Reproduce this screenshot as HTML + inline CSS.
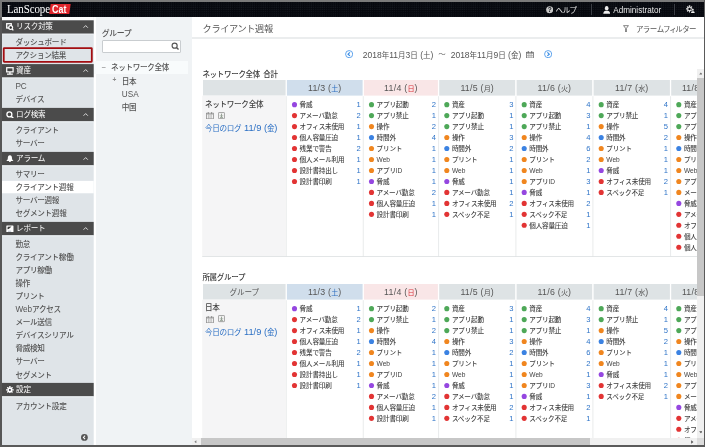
<!DOCTYPE html>
<html lang="ja"><head><meta charset="utf-8"><title>LanScope Cat</title>
<style>
html,body{margin:0;padding:0;}
body{width:705px;height:447px;overflow:hidden;position:relative;background:#fff;font-family:"Liberation Sans","Noto Sans CJK JP",sans-serif;color:#4a4a4a;-webkit-font-smoothing:antialiased;}
div,span,i,b{box-sizing:border-box}
.abs{position:absolute}
#app{position:absolute;left:0;top:0;width:705px;height:447px;will-change:transform;overflow:hidden}
#frame-t{left:0;top:0;width:705px;height:2px;background:#7a7a7a}
#frame-l{left:0;top:0;width:1.8px;height:447px;background:linear-gradient(#787878 0,#787878 17px,#565656 18px,#565656 100%)}
#frame-r{left:704px;top:0;width:1px;height:447px;background:#5a5a5a}
#frame-b{left:0;top:445px;width:705px;height:2px;background:#5a5a5a}
#top{left:1.8px;top:2px;width:702.2px;height:15.4px;background:#06080e;background-image:radial-gradient(circle at 1px 1px,#15181f 0.5px,transparent 0.8px);background-size:2.2px 2.2px;}
#logo{left:7.2px;top:0.9px;font-family:"Liberation Serif",serif;color:#fff;font-size:12.2px;line-height:16px;letter-spacing:-0.12px;transform:scaleX(0.9);transform-origin:0 0;font-feature-settings:normal}
#cat{left:50.4px;top:4px;width:20px;height:9.6px;background:#e0262c;transform:skewX(-8deg);}
#cattx{left:52.2px;top:2.9px;color:#fff;font-weight:bold;font-size:10.6px;line-height:13px;letter-spacing:0.1px;transform:scaleX(0.84);transform-origin:0 0}
.tm{font-feature-settings:"palt";color:#e8e8e8;font-size:7.5px;line-height:10px;top:5.8px;white-space:nowrap}
.sep{top:4px;width:0.8px;height:11px;background:#3a3d44}
#side{left:1.8px;top:17.4px;width:92px;height:427.6px;background:#dfe4e8}
#side-top{left:1.8px;top:17.4px;width:92px;height:2.9px;background:#fff}
.sh{position:absolute;left:1.8px;width:92px;height:13.3px;color:#fff;letter-spacing:-0.42px;font-size:7.6px;line-height:13.3px;white-space:nowrap}
.sh .si{position:absolute;left:4.0px;top:2.7px;width:7.8px;height:7.8px}
.sh .si svg{display:block;width:7.8px;height:7.8px}
.sh .st{position:absolute;left:14.3px;top:-0.3px;letter-spacing:-0.3px}
.sh .chev{position:absolute;left:81.5px;top:5px;width:5.4px;height:3.3px}
.si-item{font-weight:500;position:absolute;left:1.8px;width:92px;height:13.07px;line-height:14.2px;font-size:7.6px;letter-spacing:-0.3px;color:#555;padding-left:13.6px;white-space:nowrap}
.l{letter-spacing:0}

.lat{letter-spacing:0 !important}
#redbox{left:2.9px;top:47.2px;width:89.8px;height:15.6px;border:1.9px solid #a30d11;border-radius:0.8px}
#tree{left:96.1px;top:17.4px;width:95.6px;height:427.6px;background:#f0f3f5}
#treesel{left:94px;top:60.8px;width:94.2px;height:13.1px;background:#f8fbfc}
.tt{font-weight:500;font-size:7.6px;letter-spacing:-0.35px;line-height:10px;color:#555;white-space:nowrap}
#search{left:102.3px;top:39.7px;width:78.6px;height:13px;background:#fff;border:0.8px solid #c9cdd0;border-radius:1px}
#mainhead{left:191.7px;top:17.4px;width:512.3px;height:20px;background:#fff;border-bottom:2px solid #ebedee;box-sizing:content-box}
#title{left:202.6px;top:22.9px;font-size:9.2px;letter-spacing:-0.38px;line-height:13px;color:#555;white-space:nowrap}
#filter{font-feature-settings:"palt";left:636.4px;top:24.6px;font-size:7.5px;line-height:10px;color:#555;white-space:nowrap}
.dt{font-size:7.5px;letter-spacing:0;line-height:10px;top:49.9px;color:#555;white-space:nowrap}
.lbl{left:202.4px;font-size:7.5px;letter-spacing:-0.3px;word-spacing:1.6px;font-weight:500;line-height:10px;color:#3a3a3a;white-space:nowrap}
#scroll{left:0;top:0;width:696.8px;height:438.1px;overflow:hidden}
.tbl{position:absolute;left:0;width:760px;height:178px}
.tsvg{position:absolute;left:0;top:0;display:block}
.th{position:absolute;top:0;height:15.6px;font-size:7.1px;letter-spacing:0;line-height:15.6px;padding-top:1.2px;text-align:center;color:#555;white-space:nowrap}
span.sat{color:#2f6fc0}
span.sun{color:#d8343c}
.nm{font-weight:500;position:absolute;left:204.9px;top:19.6px;font-size:7.6px;letter-spacing:-0.3px;line-height:10px;color:#444;white-space:nowrap}
.ic{position:absolute;left:0;top:0;width:0;height:0}
.ic svg{position:absolute;display:block}
.ic .cal{left:206px;top:31.8px;width:7.9px;height:7.3px}
.ic .dl{left:218.2px;top:31.6px;width:7px;height:7.2px}
.lk{position:absolute;left:204.9px;top:43px;font-size:7.6px;letter-spacing:-0.3px;line-height:10px;color:#2b6fc4;white-space:nowrap}
.r{position:absolute;height:11px;line-height:11px;font-size:6.6px;letter-spacing:-0.2px;color:#444;white-space:nowrap;font-weight:500}
.c{position:absolute;width:10px;text-align:right;height:11px;line-height:11.8px;color:#2f74c8;font-size:7.6px;letter-spacing:0}
.th .l{font-size:8.8px;letter-spacing:0.25px}
.dt .l{font-size:8.5px}
.lk .l{font-size:9.3px}
.r .l{font-size:6.6px}
.si-item .l,.tt .l{font-size:8.2px}
#vs{left:697px;top:69.4px;width:7px;height:368.7px;background:#f0f0f0}
#vthumb{left:697px;top:78px;width:7px;height:218.200px;background:#c7c7c7}
#hs{left:191.7px;top:438.1px;width:505.3px;height:6.9px;background:#f0f0f0}
#hthumb{left:200.5px;top:438.1px;width:389.6px;height:6.9px;background:#c7c7c7}
#corner{left:697px;top:438.1px;width:7px;height:6.9px;background:#dcdcdc}
</style></head><body><div id="app">
<div class="abs" id="top"></div>
<div class="abs" id="logo">LanScope</div>
<div class="abs" id="cat"></div><div class="abs" id="cattx">Cat</div>
<svg class="abs" style="left:545.7px;top:6.2px;width:7.4px;height:7.4px" viewBox="0 0 10 10"><circle cx="5" cy="5" r="4.800" fill="#c8c8c8"/><text x="5" y="8.300" font-size="8.800" font-weight="bold" text-anchor="middle" fill="#10131a" font-family="Liberation Sans, sans-serif">?</text></svg>
<div class="abs tm" style="left:555.4px">ヘルプ</div>
<div class="abs sep" style="left:591px"></div>
<svg class="abs" style="left:603px;top:6.1px;width:7.4px;height:8px" viewBox="0 0 10 11"><ellipse cx="5" cy="3" rx="2.500" ry="3" fill="#ececec"/><path d="M0.300 10.600c0-2.800 1.800-3.700 3.200-4.100h3c1.400.4 3.200 1.300 3.200 4.100z" fill="#ececec"/></svg>
<div class="abs tm" style="left:613.3px;font-size:8.15px">Administrator</div>
<div class="abs sep" style="left:674.4px"></div>
<svg class="abs" style="left:685.6px;top:5.4px;width:9.2px;height:8.2px" viewBox="0 0 11.5 10.25"><g fill="#d8d8d8"><circle cx="4.400" cy="4.900" r="2.900"/><g><rect x="3.600" y="0.400" width="1.600" height="9" rx="0.300"/><rect x="-0.100" y="4.100" width="9" height="1.600" rx="0.300"/></g><g transform="rotate(45 4.400 4.900)"><rect x="3.600" y="0.500" width="1.600" height="8.800" rx="0.300"/><rect x="0" y="4.100" width="8.800" height="1.600" rx="0.300"/></g></g><circle cx="4.400" cy="4.900" r="1.500" fill="#06080e"/><circle cx="8.600" cy="5.800" r="1.700" fill="#06080e"/><path d="M5.600 10.250c0-2.400 1.200-3 3-3s3 .6 3 3z" fill="#06080e"/><circle cx="8.600" cy="6" r="1.150" fill="#f0f0f0"/><path d="M6.300 9.900c0-1.700 1-2.200 2.300-2.200s2.300.5 2.300 2.200z" fill="#f0f0f0"/></svg>

<svg class="abs" style="left:0;top:0;width:96px;height:447px" viewBox="0 0 96 447"><rect x="1.75" y="17" width="91.95" height="428" fill="#dfe4e8"/><rect x="1.75" y="17" width="91.95" height="3.3" fill="#fdfdfd"/><rect x="1.75" y="20.3" width="91.95" height="13.4" fill="#4b4b4b"/><rect x="1.75" y="33.70" width="91.95" height="1.2" fill="#e9edf0"/><rect x="1.75" y="64.1" width="91.95" height="13.4" fill="#4b4b4b"/><rect x="1.75" y="77.50" width="91.95" height="1.2" fill="#e9edf0"/><rect x="1.75" y="107.9" width="91.95" height="13.4" fill="#4b4b4b"/><rect x="1.75" y="121.30" width="91.95" height="1.2" fill="#e9edf0"/><rect x="1.75" y="151.9" width="91.95" height="13.4" fill="#4b4b4b"/><rect x="1.75" y="165.30" width="91.95" height="1.2" fill="#e9edf0"/><rect x="1.75" y="180.87" width="91.95" height="12.4" fill="#fff"/><rect x="1.75" y="221.9" width="91.95" height="13.4" fill="#4b4b4b"/><rect x="1.75" y="235.30" width="91.95" height="1.2" fill="#e9edf0"/><rect x="1.75" y="382.9" width="91.95" height="13.4" fill="#4b4b4b"/><rect x="1.75" y="396.30" width="91.95" height="1.2" fill="#e9edf0"/><rect x="3.75" y="48.1" width="88.05" height="13.7" fill="none" stroke="#a30d11" stroke-width="1.800" rx="0.500"/></svg>
<div class="sh" style="top:20.30px"><span class="si"><svg viewBox="0 0 12 12"><rect x="1.1" y="1.1" width="7" height="6.6" fill="none" stroke="#fff" stroke-width="2"/><circle cx="7.2" cy="7" r="2.9" fill="#4c4c4c" stroke="#fff" stroke-width="1.9"/><circle cx="7.2" cy="7" r="1.300" fill="#222"/><path d="M9.300 9.300l2 2" stroke="#fff" stroke-width="2"/></svg></span><span class="st">リスク対策</span><svg class="chev" viewBox="0 0 10 6"><path d="M1 5l4-4 4 4" fill="none" stroke="#f0f0f0" stroke-width="1.600"/></svg></div>
<div class="si-item" style="top:36.20px">ダッシュボード</div>
<div class="si-item" style="top:49.27px">アクション結果</div>
<div class="sh" style="top:64.10px"><span class="si"><svg viewBox="0 0 12 12"><rect x="1.1" y="1.1" width="9.8" height="6.4" fill="#444" stroke="#fff" stroke-width="1.9"/><path d="M6 8v2.300" stroke="#fff" stroke-width="2.600"/><path d="M1.500 11h9" stroke="#fff" stroke-width="1.900"/></svg></span><span class="st">資産</span><svg class="chev" viewBox="0 0 10 6"><path d="M1 5l4-4 4 4" fill="none" stroke="#f0f0f0" stroke-width="1.600"/></svg></div>
<div class="si-item lat" style="top:80.00px"><span class="l">PC</span></div>
<div class="si-item" style="top:93.07px">デバイス</div>
<div class="sh" style="top:107.90px"><span class="si"><svg viewBox="0 0 12 12"><circle cx="5.200" cy="5.200" r="3.800" fill="#484848" stroke="#fff" stroke-width="2"/><path d="M8 8l3.200 3.200" stroke="#fff" stroke-width="2.400"/></svg></span><span class="st">ログ検索</span><svg class="chev" viewBox="0 0 10 6"><path d="M1 5l4-4 4 4" fill="none" stroke="#f0f0f0" stroke-width="1.600"/></svg></div>
<div class="si-item" style="top:123.80px">クライアント</div>
<div class="si-item" style="top:136.87px">サーバー</div>
<div class="sh" style="top:151.90px"><span class="si"><svg viewBox="0 0 12 12"><path d="M6 0.300C3.300 0.300 2.800 3 2.800 5c0 2.200-1.600 3.200-2.300 4.300h11C10.800 8.200 9.200 7.200 9.200 5c0-2-.5-4.700-3.200-4.700z" fill="#fff"/><ellipse cx="6" cy="10.600" rx="1.600" ry="1.300" fill="#fff"/></svg></span><span class="st">アラーム</span><svg class="chev" viewBox="0 0 10 6"><path d="M1 5l4-4 4 4" fill="none" stroke="#f0f0f0" stroke-width="1.600"/></svg></div>
<div class="si-item" style="top:167.80px">サマリー</div>
<div class="si-item" style="top:180.87px">クライアント週報</div>
<div class="si-item" style="top:193.94px">サーバー週報</div>
<div class="si-item" style="top:207.01px">セグメント週報</div>
<div class="sh" style="top:221.90px"><span class="si"><svg viewBox="0 0 12 12"><rect x="0.500" y="0.800" width="11" height="11" rx="0.800" fill="#fff"/><path d="M2.200 6.500L2.600 2.800 8.500 2.200 4.300 6.200z" fill="#3a3a3a"/><path d="M3 9.500h5" stroke="#8a96a8" stroke-width="1"/></svg></span><span class="st">レポート</span><svg class="chev" viewBox="0 0 10 6"><path d="M1 5l4-4 4 4" fill="none" stroke="#f0f0f0" stroke-width="1.600"/></svg></div>
<div class="si-item" style="top:237.80px">勤怠</div>
<div class="si-item" style="top:250.87px">クライアント稼働</div>
<div class="si-item" style="top:263.94px">アプリ稼働</div>
<div class="si-item" style="top:277.01px">操作</div>
<div class="si-item" style="top:290.08px">プリント</div>
<div class="si-item" style="top:303.15px"><span class="l">Web</span>アクセス</div>
<div class="si-item" style="top:316.22px">メール送信</div>
<div class="si-item" style="top:329.29px">デバイスシリアル</div>
<div class="si-item" style="top:342.36px">脅威検知</div>
<div class="si-item" style="top:355.43px">サーバー</div>
<div class="si-item" style="top:368.50px">セグメント</div>
<div class="sh" style="top:382.90px"><span class="si"><svg viewBox="0 0 12 12"><g fill="#fff"><circle cx="6" cy="6" r="3.700"/><g id="t"><rect x="4.900" y="0" width="2.200" height="12" rx="0.500"/><rect x="0" y="4.900" width="12" height="2.200" rx="0.500"/></g><g transform="rotate(45 6 6)"><rect x="4.900" y="0.300" width="2.200" height="11.400" rx="0.500"/><rect x="0.300" y="4.900" width="11.400" height="2.200" rx="0.500"/></g></g><circle cx="6" cy="6" r="1.500" fill="#2a2a3a"/></svg></span><span class="st">設定</span></div>
<div class="si-item" style="top:399.70px">アカウント設定</div>
<svg class="abs" style="left:80.8px;top:434px;width:6.8px;height:6.8px" viewBox="0 0 10 10"><circle cx="5" cy="5" r="5" fill="#555"/><path d="M6 2.500L3.500 5 6 7.500" fill="none" stroke="#fff" stroke-width="1.500"/></svg>

<div class="abs" id="tree"></div>
<div class="abs" id="treesel"></div>
<div class="abs tt" style="left:101.7px;top:28.9px;font-size:7.900px">グループ</div>
<div class="abs" id="search"></div>
<svg class="abs" style="left:170.6px;top:42.2px;width:8.4px;height:8.4px" viewBox="0 0 12 12"><circle cx="5.200" cy="5.200" r="3.600" fill="none" stroke="#555" stroke-width="1.700"/><path d="M7.800 7.800l3 3" stroke="#555" stroke-width="2"/></svg>
<div class="abs tt" style="left:101.4px;top:62.6px;color:#777">−</div>
<div class="abs tt" style="left:111.1px;top:63.4px">ネットワーク全体</div>
<div class="abs tt" style="left:112.4px;top:74.8px;font-size:6.6px;font-weight:bold;color:#8a8a8a">+</div>
<div class="abs tt" style="left:121.8px;top:76.6px">日本</div>
<div class="abs tt" style="left:121.8px;top:89.8px;letter-spacing:0"><span class="l">USA</span></div>
<div class="abs tt" style="left:121.8px;top:103.4px">中国</div>

<div class="abs" id="mainhead"></div>
<div class="abs" id="title">クライアント週報</div>
<svg class="abs" style="left:623.2px;top:24.8px;width:6px;height:7.6px" viewBox="0 0 10 12.500"><path d="M0.600 1h8.800M1.200 1.200L4.300 5.500v6M8.800 1.200L5.700 5.500v6M4 11.500h2" fill="none" stroke="#666" stroke-width="1.300"/></svg>
<div class="abs" id="filter">アラームフィルター</div>

<svg class="abs" style="left:344.5px;top:50.1px;width:8.3px;height:8.3px" viewBox="0 0 10 10"><circle cx="5" cy="5" r="4.300" fill="none" stroke="#4a98ea" stroke-width="1.050"/><path d="M5.900 2.900L3.700 5 5.900 7.100" fill="none" stroke="#3a8ee6" stroke-width="1.500"/></svg>
<div class="abs dt" style="left:362.8px"><span class="l">2018</span>年<span class="l">11</span>月<span class="l">3</span>日<span class="l"> (</span>土<span class="l">)</span></div>
<div class="abs dt" style="left:438.3px">～</div>
<div class="abs dt" style="left:450.7px"><span class="l">2018</span>年<span class="l">11</span>月<span class="l">9</span>日<span class="l"> (</span>金<span class="l">)</span></div>
<svg class="abs" style="left:526px;top:50.6px;width:8px;height:7.6px" viewBox="0 0 12 11"><rect x="0.700" y="1.800" width="10.600" height="8.600" fill="#f4f4f4" stroke="#6e6e6e" stroke-width="1.200"/><path d="M4.300 3.500v7M7.700 3.500v7M0.700 6.800h10.600" stroke="#999" stroke-width="1" fill="none"/><path d="M0.700 3.600h10.600" stroke="#888" stroke-width="0.900"/><path d="M3.400 0v3M8.600 0v3" stroke="#666" stroke-width="1.500" fill="none"/></svg>
<svg class="abs" style="left:543.9px;top:50.1px;width:8.3px;height:8.3px" viewBox="0 0 10 10"><circle cx="5" cy="5" r="4.300" fill="none" stroke="#4a98ea" stroke-width="1.050"/><path d="M4.100 2.900L6.300 5 4.100 7.100" fill="none" stroke="#3a8ee6" stroke-width="1.500"/></svg>

<div class="abs" id="scroll">
<div class="abs lbl" style="left:202.4px;top:70px">ネットワーク全体 合計</div>
<div class="tbl" style="top:80.1px">
<svg class="tsvg" width="760" height="178" viewBox="0 0 760 178"><rect x="203" y="0" width="82.6" height="15.6" fill="#dee3e5"/><rect x="202.2" y="15.7" width="83.4" height="160.8" fill="#f5f5f6"/><rect x="286.9" y="0" width="75.70" height="15.6" fill="#d0deec"/><circle cx="294.50" cy="24.65" r="2.55" fill="#9547e0"/><circle cx="294.50" cy="35.62" r="2.55" fill="#e23434"/><circle cx="294.50" cy="46.59" r="2.55" fill="#e23434"/><circle cx="294.50" cy="57.56" r="2.55" fill="#e23434"/><circle cx="294.50" cy="68.53" r="2.55" fill="#e23434"/><circle cx="294.50" cy="79.50" r="2.55" fill="#e23434"/><circle cx="294.50" cy="90.47" r="2.55" fill="#e23434"/><circle cx="294.50" cy="101.44" r="2.55" fill="#e23434"/><rect x="363.9" y="0" width="74.00" height="15.6" fill="#f9e6e7"/><circle cx="371.50" cy="24.65" r="2.55" fill="#4ea858"/><circle cx="371.50" cy="35.62" r="2.55" fill="#4ea858"/><circle cx="371.50" cy="46.59" r="2.55" fill="#f0861f"/><circle cx="371.50" cy="57.56" r="2.55" fill="#3b82e2"/><circle cx="371.50" cy="68.53" r="2.55" fill="#f0861f"/><circle cx="371.50" cy="79.50" r="2.55" fill="#f0861f"/><circle cx="371.50" cy="90.47" r="2.55" fill="#f0861f"/><circle cx="371.50" cy="101.44" r="2.55" fill="#9547e0"/><circle cx="371.50" cy="112.41" r="2.55" fill="#e23434"/><circle cx="371.50" cy="123.38" r="2.55" fill="#e23434"/><circle cx="371.50" cy="134.35" r="2.55" fill="#e23434"/><rect x="439.2" y="0" width="76.00" height="15.6" fill="#dee3e5"/><circle cx="446.80" cy="24.65" r="2.55" fill="#4ea858"/><circle cx="446.80" cy="35.62" r="2.55" fill="#4ea858"/><circle cx="446.80" cy="46.59" r="2.55" fill="#4ea858"/><circle cx="446.80" cy="57.56" r="2.55" fill="#f0861f"/><circle cx="446.80" cy="68.53" r="2.55" fill="#3b82e2"/><circle cx="446.80" cy="79.50" r="2.55" fill="#f0861f"/><circle cx="446.80" cy="90.47" r="2.55" fill="#f0861f"/><circle cx="446.80" cy="101.44" r="2.55" fill="#9547e0"/><circle cx="446.80" cy="112.41" r="2.55" fill="#e23434"/><circle cx="446.80" cy="123.38" r="2.55" fill="#e23434"/><circle cx="446.80" cy="134.35" r="2.55" fill="#e23434"/><rect x="516.6" y="0" width="75.60" height="15.6" fill="#dee3e5"/><circle cx="524.20" cy="24.65" r="2.55" fill="#4ea858"/><circle cx="524.20" cy="35.62" r="2.55" fill="#4ea858"/><circle cx="524.20" cy="46.59" r="2.55" fill="#4ea858"/><circle cx="524.20" cy="57.56" r="2.55" fill="#f0861f"/><circle cx="524.20" cy="68.53" r="2.55" fill="#3b82e2"/><circle cx="524.20" cy="79.50" r="2.55" fill="#f0861f"/><circle cx="524.20" cy="90.47" r="2.55" fill="#f0861f"/><circle cx="524.20" cy="101.44" r="2.55" fill="#f0861f"/><circle cx="524.20" cy="112.41" r="2.55" fill="#9547e0"/><circle cx="524.20" cy="123.38" r="2.55" fill="#e23434"/><circle cx="524.20" cy="134.35" r="2.55" fill="#e23434"/><circle cx="524.20" cy="145.32" r="2.55" fill="#e23434"/><rect x="593.6" y="0" width="76.30" height="15.6" fill="#dee3e5"/><circle cx="601.20" cy="24.65" r="2.55" fill="#4ea858"/><circle cx="601.20" cy="35.62" r="2.55" fill="#4ea858"/><circle cx="601.20" cy="46.59" r="2.55" fill="#f0861f"/><circle cx="601.20" cy="57.56" r="2.55" fill="#3b82e2"/><circle cx="601.20" cy="68.53" r="2.55" fill="#f0861f"/><circle cx="601.20" cy="79.50" r="2.55" fill="#f0861f"/><circle cx="601.20" cy="90.47" r="2.55" fill="#9547e0"/><circle cx="601.20" cy="101.44" r="2.55" fill="#e23434"/><circle cx="601.20" cy="112.41" r="2.55" fill="#e23434"/><rect x="671.2" y="0" width="55.00" height="15.6" fill="#dee3e5"/><circle cx="678.80" cy="24.65" r="2.55" fill="#4ea858"/><circle cx="678.80" cy="35.62" r="2.55" fill="#4ea858"/><circle cx="678.80" cy="46.59" r="2.55" fill="#4ea858"/><circle cx="678.80" cy="57.56" r="2.55" fill="#f0861f"/><circle cx="678.80" cy="68.53" r="2.55" fill="#3b82e2"/><circle cx="678.80" cy="79.50" r="2.55" fill="#f0861f"/><circle cx="678.80" cy="90.47" r="2.55" fill="#f0861f"/><circle cx="678.80" cy="101.44" r="2.55" fill="#f0861f"/><circle cx="678.80" cy="112.41" r="2.55" fill="#f0861f"/><circle cx="678.80" cy="123.38" r="2.55" fill="#9547e0"/><circle cx="678.80" cy="134.35" r="2.55" fill="#e23434"/><circle cx="678.80" cy="145.32" r="2.55" fill="#e23434"/><circle cx="678.80" cy="156.29" r="2.55" fill="#e23434"/><circle cx="678.80" cy="167.26" r="2.55" fill="#e23434"/><path d="M286.25 16.2V176.6" stroke="#dfe2e4" stroke-width="0.7"/><path d="M363.25 16.2V176.6" stroke="#dfe2e4" stroke-width="0.7"/><path d="M438.55 16.2V176.6" stroke="#dfe2e4" stroke-width="0.7"/><path d="M515.9 16.2V176.6" stroke="#dfe2e4" stroke-width="0.7"/><path d="M592.9 16.2V176.6" stroke="#dfe2e4" stroke-width="0.7"/><path d="M670.55 16.2V176.6" stroke="#dfe2e4" stroke-width="0.7"/><path d="M202.2 176.5H760" stroke="#dcdfe1" stroke-width="0.8"/></svg>
<div class="nm">ネットワーク全体</div><div class="ic"><svg class="cal" viewBox="0 0 12 11"><rect x="0.700" y="1.800" width="10.600" height="8.600" fill="#f0f0f0" stroke="#8e8e8e" stroke-width="1.200"/><path d="M4.300 3.500v7M7.700 3.500v7" stroke="#999" stroke-width="1.100" fill="none"/><path d="M0.700 3.600h10.600" stroke="#aaa" stroke-width="0.900"/><path d="M3.400 0v3M8.600 0v3" stroke="#888" stroke-width="1.400" fill="none"/></svg><svg class="dl" viewBox="0 0 11 11"><rect x="0.700" y="0.700" width="9.600" height="9.600" rx="1" fill="#f2f2f2" stroke="#8e8e8e" stroke-width="1.200"/><path d="M5.500 2.500v4.500M3.400 5.200L5.500 7.400 7.600 5.200M3.200 8.700h4.600" stroke="#7a8a7a" stroke-width="1.200" fill="none"/></svg></div><div class="lk">今日のログ<span class="l"> 11/9 (</span>金<span class="l">)</span></div>
<div class="th" style="left:286.9px;width:75.70px"><span class="l">11/3 (</span><span class="sat">土</span><span class="l">)</span></div>
<div class="r" style="left:299.60px;top:19.15px">脅威</div><div class="c" style="left:350.80px;top:19.15px">1</div>
<div class="r" style="left:299.60px;top:30.12px">アメーバ勤怠</div><div class="c" style="left:350.80px;top:30.12px">2</div>
<div class="r" style="left:299.60px;top:41.09px">オフィス未使用</div><div class="c" style="left:350.80px;top:41.09px">1</div>
<div class="r" style="left:299.60px;top:52.06px">個人容量圧迫</div><div class="c" style="left:350.80px;top:52.06px">1</div>
<div class="r" style="left:299.60px;top:63.03px">残業で警告</div><div class="c" style="left:350.80px;top:63.03px">2</div>
<div class="r" style="left:299.60px;top:74.00px">個人メール利用</div><div class="c" style="left:350.80px;top:74.00px">1</div>
<div class="r" style="left:299.60px;top:84.97px">設計書持出し</div><div class="c" style="left:350.80px;top:84.97px">1</div>
<div class="r" style="left:299.60px;top:95.94px">設計書印刷</div><div class="c" style="left:350.80px;top:95.94px">1</div>
<div class="th" style="left:363.9px;width:74.00px"><span class="l">11/4 (</span><span class="sun">日</span><span class="l">)</span></div>
<div class="r" style="left:376.60px;top:19.15px">アプリ起動</div><div class="c" style="left:426.10px;top:19.15px">2</div>
<div class="r" style="left:376.60px;top:30.12px">アプリ禁止</div><div class="c" style="left:426.10px;top:30.12px">1</div>
<div class="r" style="left:376.60px;top:41.09px">操作</div><div class="c" style="left:426.10px;top:41.09px">2</div>
<div class="r" style="left:376.60px;top:52.06px">時間外</div><div class="c" style="left:426.10px;top:52.06px">4</div>
<div class="r" style="left:376.60px;top:63.03px">プリント</div><div class="c" style="left:426.10px;top:63.03px">1</div>
<div class="r" style="left:376.60px;top:74.00px"><span class="l">Web</span></div><div class="c" style="left:426.10px;top:74.00px">1</div>
<div class="r" style="left:376.60px;top:84.97px">アプリ<span class="l">ID</span></div><div class="c" style="left:426.10px;top:84.97px">1</div>
<div class="r" style="left:376.60px;top:95.94px">脅威</div><div class="c" style="left:426.10px;top:95.94px">1</div>
<div class="r" style="left:376.60px;top:106.91px">アメーバ勤怠</div><div class="c" style="left:426.10px;top:106.91px">2</div>
<div class="r" style="left:376.60px;top:117.88px">個人容量圧迫</div><div class="c" style="left:426.10px;top:117.88px">1</div>
<div class="r" style="left:376.60px;top:128.85px">設計書印刷</div><div class="c" style="left:426.10px;top:128.85px">1</div>
<div class="th" style="left:439.2px;width:76.00px"><span class="l">11/5 (</span>月<span class="l">)</span></div>
<div class="r" style="left:451.90px;top:19.15px">資産</div><div class="c" style="left:503.40px;top:19.15px">3</div>
<div class="r" style="left:451.90px;top:30.12px">アプリ起動</div><div class="c" style="left:503.40px;top:30.12px">1</div>
<div class="r" style="left:451.90px;top:41.09px">アプリ禁止</div><div class="c" style="left:503.40px;top:41.09px">1</div>
<div class="r" style="left:451.90px;top:52.06px">操作</div><div class="c" style="left:503.40px;top:52.06px">3</div>
<div class="r" style="left:451.90px;top:63.03px">時間外</div><div class="c" style="left:503.40px;top:63.03px">2</div>
<div class="r" style="left:451.90px;top:74.00px">プリント</div><div class="c" style="left:503.40px;top:74.00px">1</div>
<div class="r" style="left:451.90px;top:84.97px"><span class="l">Web</span></div><div class="c" style="left:503.40px;top:84.97px">1</div>
<div class="r" style="left:451.90px;top:95.94px">脅威</div><div class="c" style="left:503.40px;top:95.94px">1</div>
<div class="r" style="left:451.90px;top:106.91px">アメーバ勤怠</div><div class="c" style="left:503.40px;top:106.91px">1</div>
<div class="r" style="left:451.90px;top:117.88px">オフィス未使用</div><div class="c" style="left:503.40px;top:117.88px">2</div>
<div class="r" style="left:451.90px;top:128.85px">スペック不足</div><div class="c" style="left:503.40px;top:128.85px">1</div>
<div class="th" style="left:516.6px;width:75.60px"><span class="l">11/6 (</span>火<span class="l">)</span></div>
<div class="r" style="left:529.30px;top:19.15px">資産</div><div class="c" style="left:580.40px;top:19.15px">4</div>
<div class="r" style="left:529.30px;top:30.12px">アプリ起動</div><div class="c" style="left:580.40px;top:30.12px">3</div>
<div class="r" style="left:529.30px;top:41.09px">アプリ禁止</div><div class="c" style="left:580.40px;top:41.09px">1</div>
<div class="r" style="left:529.30px;top:52.06px">操作</div><div class="c" style="left:580.40px;top:52.06px">4</div>
<div class="r" style="left:529.30px;top:63.03px">時間外</div><div class="c" style="left:580.40px;top:63.03px">6</div>
<div class="r" style="left:529.30px;top:74.00px">プリント</div><div class="c" style="left:580.40px;top:74.00px">2</div>
<div class="r" style="left:529.30px;top:84.97px"><span class="l">Web</span></div><div class="c" style="left:580.40px;top:84.97px">1</div>
<div class="r" style="left:529.30px;top:95.94px">アプリ<span class="l">ID</span></div><div class="c" style="left:580.40px;top:95.94px">3</div>
<div class="r" style="left:529.30px;top:106.91px">脅威</div><div class="c" style="left:580.40px;top:106.91px">1</div>
<div class="r" style="left:529.30px;top:117.88px">オフィス未使用</div><div class="c" style="left:580.40px;top:117.88px">2</div>
<div class="r" style="left:529.30px;top:128.85px">スペック不足</div><div class="c" style="left:580.40px;top:128.85px">1</div>
<div class="r" style="left:529.30px;top:139.82px">個人容量圧迫</div><div class="c" style="left:580.40px;top:139.82px">1</div>
<div class="th" style="left:593.6px;width:76.30px"><span class="l">11/7 (</span>水<span class="l">)</span></div>
<div class="r" style="left:606.30px;top:19.15px">資産</div><div class="c" style="left:658.10px;top:19.15px">4</div>
<div class="r" style="left:606.30px;top:30.12px">アプリ禁止</div><div class="c" style="left:658.10px;top:30.12px">1</div>
<div class="r" style="left:606.30px;top:41.09px">操作</div><div class="c" style="left:658.10px;top:41.09px">5</div>
<div class="r" style="left:606.30px;top:52.06px">時間外</div><div class="c" style="left:658.10px;top:52.06px">2</div>
<div class="r" style="left:606.30px;top:63.03px">プリント</div><div class="c" style="left:658.10px;top:63.03px">1</div>
<div class="r" style="left:606.30px;top:74.00px"><span class="l">Web</span></div><div class="c" style="left:658.10px;top:74.00px">1</div>
<div class="r" style="left:606.30px;top:84.97px">脅威</div><div class="c" style="left:658.10px;top:84.97px">1</div>
<div class="r" style="left:606.30px;top:95.94px">オフィス未使用</div><div class="c" style="left:658.10px;top:95.94px">2</div>
<div class="r" style="left:606.30px;top:106.91px">スペック不足</div><div class="c" style="left:658.10px;top:106.91px">1</div>
<div class="th" style="left:671.2px;width:55.00px"><span class="l">11/8 (</span>木<span class="l">)</span></div>
<div class="r" style="left:683.90px;top:19.15px">資産</div><div class="c" style="left:714.40px;top:19.15px">5</div>
<div class="r" style="left:683.90px;top:30.12px">アプリ起動</div><div class="c" style="left:714.40px;top:30.12px">2</div>
<div class="r" style="left:683.90px;top:41.09px">アプリ禁止</div><div class="c" style="left:714.40px;top:41.09px">1</div>
<div class="r" style="left:683.90px;top:52.06px">操作</div><div class="c" style="left:714.40px;top:52.06px">4</div>
<div class="r" style="left:683.90px;top:63.03px">時間外</div><div class="c" style="left:714.40px;top:63.03px">3</div>
<div class="r" style="left:683.90px;top:74.00px">プリント</div><div class="c" style="left:714.40px;top:74.00px">1</div>
<div class="r" style="left:683.90px;top:84.97px"><span class="l">Web</span></div><div class="c" style="left:714.40px;top:84.97px">2</div>
<div class="r" style="left:683.90px;top:95.94px">アプリ<span class="l">ID</span></div><div class="c" style="left:714.40px;top:95.94px">1</div>
<div class="r" style="left:683.90px;top:106.91px">メール送信</div><div class="c" style="left:714.40px;top:106.91px">1</div>
<div class="r" style="left:683.90px;top:117.88px">脅威</div><div class="c" style="left:714.40px;top:117.88px">1</div>
<div class="r" style="left:683.90px;top:128.85px">アメーバ勤怠</div><div class="c" style="left:714.40px;top:128.85px">1</div>
<div class="r" style="left:683.90px;top:139.82px">オフィス未使用</div><div class="c" style="left:714.40px;top:139.82px">1</div>
<div class="r" style="left:683.90px;top:150.79px">個人容量圧迫</div><div class="c" style="left:714.40px;top:150.79px">1</div>
<div class="r" style="left:683.90px;top:161.76px">個人メール利用</div><div class="c" style="left:714.40px;top:161.76px">1</div>
</div>
<div class="abs lbl" style="left:202.4px;top:273.4px">所属グループ</div>
<div class="tbl" style="top:283.9px">
<svg class="tsvg" width="760" height="178" viewBox="0 0 760 178"><rect x="203" y="0" width="82.6" height="15.6" fill="#dee3e5"/><rect x="202.2" y="15.7" width="83.4" height="160.8" fill="#f5f5f6"/><rect x="286.9" y="0" width="75.70" height="15.6" fill="#d0deec"/><circle cx="294.50" cy="24.65" r="2.55" fill="#9547e0"/><circle cx="294.50" cy="35.62" r="2.55" fill="#e23434"/><circle cx="294.50" cy="46.59" r="2.55" fill="#e23434"/><circle cx="294.50" cy="57.56" r="2.55" fill="#e23434"/><circle cx="294.50" cy="68.53" r="2.55" fill="#e23434"/><circle cx="294.50" cy="79.50" r="2.55" fill="#e23434"/><circle cx="294.50" cy="90.47" r="2.55" fill="#e23434"/><circle cx="294.50" cy="101.44" r="2.55" fill="#e23434"/><rect x="363.9" y="0" width="74.00" height="15.6" fill="#f9e6e7"/><circle cx="371.50" cy="24.65" r="2.55" fill="#4ea858"/><circle cx="371.50" cy="35.62" r="2.55" fill="#4ea858"/><circle cx="371.50" cy="46.59" r="2.55" fill="#f0861f"/><circle cx="371.50" cy="57.56" r="2.55" fill="#3b82e2"/><circle cx="371.50" cy="68.53" r="2.55" fill="#f0861f"/><circle cx="371.50" cy="79.50" r="2.55" fill="#f0861f"/><circle cx="371.50" cy="90.47" r="2.55" fill="#f0861f"/><circle cx="371.50" cy="101.44" r="2.55" fill="#9547e0"/><circle cx="371.50" cy="112.41" r="2.55" fill="#e23434"/><circle cx="371.50" cy="123.38" r="2.55" fill="#e23434"/><circle cx="371.50" cy="134.35" r="2.55" fill="#e23434"/><rect x="439.2" y="0" width="76.00" height="15.6" fill="#dee3e5"/><circle cx="446.80" cy="24.65" r="2.55" fill="#4ea858"/><circle cx="446.80" cy="35.62" r="2.55" fill="#4ea858"/><circle cx="446.80" cy="46.59" r="2.55" fill="#4ea858"/><circle cx="446.80" cy="57.56" r="2.55" fill="#f0861f"/><circle cx="446.80" cy="68.53" r="2.55" fill="#3b82e2"/><circle cx="446.80" cy="79.50" r="2.55" fill="#f0861f"/><circle cx="446.80" cy="90.47" r="2.55" fill="#f0861f"/><circle cx="446.80" cy="101.44" r="2.55" fill="#9547e0"/><circle cx="446.80" cy="112.41" r="2.55" fill="#e23434"/><circle cx="446.80" cy="123.38" r="2.55" fill="#e23434"/><circle cx="446.80" cy="134.35" r="2.55" fill="#e23434"/><rect x="516.6" y="0" width="75.60" height="15.6" fill="#dee3e5"/><circle cx="524.20" cy="24.65" r="2.55" fill="#4ea858"/><circle cx="524.20" cy="35.62" r="2.55" fill="#4ea858"/><circle cx="524.20" cy="46.59" r="2.55" fill="#4ea858"/><circle cx="524.20" cy="57.56" r="2.55" fill="#f0861f"/><circle cx="524.20" cy="68.53" r="2.55" fill="#3b82e2"/><circle cx="524.20" cy="79.50" r="2.55" fill="#f0861f"/><circle cx="524.20" cy="90.47" r="2.55" fill="#f0861f"/><circle cx="524.20" cy="101.44" r="2.55" fill="#f0861f"/><circle cx="524.20" cy="112.41" r="2.55" fill="#9547e0"/><circle cx="524.20" cy="123.38" r="2.55" fill="#e23434"/><circle cx="524.20" cy="134.35" r="2.55" fill="#e23434"/><rect x="593.6" y="0" width="76.30" height="15.6" fill="#dee3e5"/><circle cx="601.20" cy="24.65" r="2.55" fill="#4ea858"/><circle cx="601.20" cy="35.62" r="2.55" fill="#4ea858"/><circle cx="601.20" cy="46.59" r="2.55" fill="#f0861f"/><circle cx="601.20" cy="57.56" r="2.55" fill="#3b82e2"/><circle cx="601.20" cy="68.53" r="2.55" fill="#f0861f"/><circle cx="601.20" cy="79.50" r="2.55" fill="#f0861f"/><circle cx="601.20" cy="90.47" r="2.55" fill="#9547e0"/><circle cx="601.20" cy="101.44" r="2.55" fill="#e23434"/><circle cx="601.20" cy="112.41" r="2.55" fill="#e23434"/><rect x="671.2" y="0" width="55.00" height="15.6" fill="#dee3e5"/><circle cx="678.80" cy="24.65" r="2.55" fill="#4ea858"/><circle cx="678.80" cy="35.62" r="2.55" fill="#4ea858"/><circle cx="678.80" cy="46.59" r="2.55" fill="#4ea858"/><circle cx="678.80" cy="57.56" r="2.55" fill="#f0861f"/><circle cx="678.80" cy="68.53" r="2.55" fill="#3b82e2"/><circle cx="678.80" cy="79.50" r="2.55" fill="#f0861f"/><circle cx="678.80" cy="90.47" r="2.55" fill="#f0861f"/><circle cx="678.80" cy="101.44" r="2.55" fill="#f0861f"/><circle cx="678.80" cy="112.41" r="2.55" fill="#f0861f"/><circle cx="678.80" cy="123.38" r="2.55" fill="#9547e0"/><circle cx="678.80" cy="134.35" r="2.55" fill="#e23434"/><circle cx="678.80" cy="145.32" r="2.55" fill="#e23434"/><circle cx="678.80" cy="156.29" r="2.55" fill="#e23434"/><circle cx="678.80" cy="167.26" r="2.55" fill="#e23434"/><path d="M286.25 16.2V176.6" stroke="#dfe2e4" stroke-width="0.7"/><path d="M363.25 16.2V176.6" stroke="#dfe2e4" stroke-width="0.7"/><path d="M438.55 16.2V176.6" stroke="#dfe2e4" stroke-width="0.7"/><path d="M515.9 16.2V176.6" stroke="#dfe2e4" stroke-width="0.7"/><path d="M592.9 16.2V176.6" stroke="#dfe2e4" stroke-width="0.7"/><path d="M670.55 16.2V176.6" stroke="#dfe2e4" stroke-width="0.7"/><path d="M202.2 176.5H760" stroke="#dcdfe1" stroke-width="0.8"/></svg>
<div class="th" style="left:203px;width:82.6px;font-size:7.6px;letter-spacing:-0.1px">グループ</div>
<div class="nm">日本</div><div class="ic"><svg class="cal" viewBox="0 0 12 11"><rect x="0.700" y="1.800" width="10.600" height="8.600" fill="#f0f0f0" stroke="#8e8e8e" stroke-width="1.200"/><path d="M4.300 3.500v7M7.700 3.500v7" stroke="#999" stroke-width="1.100" fill="none"/><path d="M0.700 3.600h10.600" stroke="#aaa" stroke-width="0.900"/><path d="M3.400 0v3M8.600 0v3" stroke="#888" stroke-width="1.400" fill="none"/></svg><svg class="dl" viewBox="0 0 11 11"><rect x="0.700" y="0.700" width="9.600" height="9.600" rx="1" fill="#f2f2f2" stroke="#8e8e8e" stroke-width="1.200"/><path d="M5.500 2.500v4.500M3.400 5.200L5.500 7.400 7.600 5.200M3.200 8.700h4.600" stroke="#7a8a7a" stroke-width="1.200" fill="none"/></svg></div><div class="lk">今日のログ<span class="l"> 11/9 (</span>金<span class="l">)</span></div>
<div class="th" style="left:286.9px;width:75.70px"><span class="l">11/3 (</span><span class="sat">土</span><span class="l">)</span></div>
<div class="r" style="left:299.60px;top:19.15px">脅威</div><div class="c" style="left:350.80px;top:19.15px">1</div>
<div class="r" style="left:299.60px;top:30.12px">アメーバ勤怠</div><div class="c" style="left:350.80px;top:30.12px">2</div>
<div class="r" style="left:299.60px;top:41.09px">オフィス未使用</div><div class="c" style="left:350.80px;top:41.09px">1</div>
<div class="r" style="left:299.60px;top:52.06px">個人容量圧迫</div><div class="c" style="left:350.80px;top:52.06px">1</div>
<div class="r" style="left:299.60px;top:63.03px">残業で警告</div><div class="c" style="left:350.80px;top:63.03px">2</div>
<div class="r" style="left:299.60px;top:74.00px">個人メール利用</div><div class="c" style="left:350.80px;top:74.00px">1</div>
<div class="r" style="left:299.60px;top:84.97px">設計書持出し</div><div class="c" style="left:350.80px;top:84.97px">1</div>
<div class="r" style="left:299.60px;top:95.94px">設計書印刷</div><div class="c" style="left:350.80px;top:95.94px">1</div>
<div class="th" style="left:363.9px;width:74.00px"><span class="l">11/4 (</span><span class="sun">日</span><span class="l">)</span></div>
<div class="r" style="left:376.60px;top:19.15px">アプリ起動</div><div class="c" style="left:426.10px;top:19.15px">2</div>
<div class="r" style="left:376.60px;top:30.12px">アプリ禁止</div><div class="c" style="left:426.10px;top:30.12px">1</div>
<div class="r" style="left:376.60px;top:41.09px">操作</div><div class="c" style="left:426.10px;top:41.09px">2</div>
<div class="r" style="left:376.60px;top:52.06px">時間外</div><div class="c" style="left:426.10px;top:52.06px">4</div>
<div class="r" style="left:376.60px;top:63.03px">プリント</div><div class="c" style="left:426.10px;top:63.03px">1</div>
<div class="r" style="left:376.60px;top:74.00px"><span class="l">Web</span></div><div class="c" style="left:426.10px;top:74.00px">1</div>
<div class="r" style="left:376.60px;top:84.97px">アプリ<span class="l">ID</span></div><div class="c" style="left:426.10px;top:84.97px">1</div>
<div class="r" style="left:376.60px;top:95.94px">脅威</div><div class="c" style="left:426.10px;top:95.94px">1</div>
<div class="r" style="left:376.60px;top:106.91px">アメーバ勤怠</div><div class="c" style="left:426.10px;top:106.91px">2</div>
<div class="r" style="left:376.60px;top:117.88px">個人容量圧迫</div><div class="c" style="left:426.10px;top:117.88px">1</div>
<div class="r" style="left:376.60px;top:128.85px">設計書印刷</div><div class="c" style="left:426.10px;top:128.85px">1</div>
<div class="th" style="left:439.2px;width:76.00px"><span class="l">11/5 (</span>月<span class="l">)</span></div>
<div class="r" style="left:451.90px;top:19.15px">資産</div><div class="c" style="left:503.40px;top:19.15px">3</div>
<div class="r" style="left:451.90px;top:30.12px">アプリ起動</div><div class="c" style="left:503.40px;top:30.12px">1</div>
<div class="r" style="left:451.90px;top:41.09px">アプリ禁止</div><div class="c" style="left:503.40px;top:41.09px">1</div>
<div class="r" style="left:451.90px;top:52.06px">操作</div><div class="c" style="left:503.40px;top:52.06px">3</div>
<div class="r" style="left:451.90px;top:63.03px">時間外</div><div class="c" style="left:503.40px;top:63.03px">2</div>
<div class="r" style="left:451.90px;top:74.00px">プリント</div><div class="c" style="left:503.40px;top:74.00px">1</div>
<div class="r" style="left:451.90px;top:84.97px"><span class="l">Web</span></div><div class="c" style="left:503.40px;top:84.97px">1</div>
<div class="r" style="left:451.90px;top:95.94px">脅威</div><div class="c" style="left:503.40px;top:95.94px">1</div>
<div class="r" style="left:451.90px;top:106.91px">アメーバ勤怠</div><div class="c" style="left:503.40px;top:106.91px">1</div>
<div class="r" style="left:451.90px;top:117.88px">オフィス未使用</div><div class="c" style="left:503.40px;top:117.88px">2</div>
<div class="r" style="left:451.90px;top:128.85px">スペック不足</div><div class="c" style="left:503.40px;top:128.85px">1</div>
<div class="th" style="left:516.6px;width:75.60px"><span class="l">11/6 (</span>火<span class="l">)</span></div>
<div class="r" style="left:529.30px;top:19.15px">資産</div><div class="c" style="left:580.40px;top:19.15px">4</div>
<div class="r" style="left:529.30px;top:30.12px">アプリ起動</div><div class="c" style="left:580.40px;top:30.12px">3</div>
<div class="r" style="left:529.30px;top:41.09px">アプリ禁止</div><div class="c" style="left:580.40px;top:41.09px">1</div>
<div class="r" style="left:529.30px;top:52.06px">操作</div><div class="c" style="left:580.40px;top:52.06px">4</div>
<div class="r" style="left:529.30px;top:63.03px">時間外</div><div class="c" style="left:580.40px;top:63.03px">6</div>
<div class="r" style="left:529.30px;top:74.00px">プリント</div><div class="c" style="left:580.40px;top:74.00px">2</div>
<div class="r" style="left:529.30px;top:84.97px"><span class="l">Web</span></div><div class="c" style="left:580.40px;top:84.97px">1</div>
<div class="r" style="left:529.30px;top:95.94px">アプリ<span class="l">ID</span></div><div class="c" style="left:580.40px;top:95.94px">3</div>
<div class="r" style="left:529.30px;top:106.91px">脅威</div><div class="c" style="left:580.40px;top:106.91px">1</div>
<div class="r" style="left:529.30px;top:117.88px">オフィス未使用</div><div class="c" style="left:580.40px;top:117.88px">2</div>
<div class="r" style="left:529.30px;top:128.85px">スペック不足</div><div class="c" style="left:580.40px;top:128.85px">1</div>
<div class="th" style="left:593.6px;width:76.30px"><span class="l">11/7 (</span>水<span class="l">)</span></div>
<div class="r" style="left:606.30px;top:19.15px">資産</div><div class="c" style="left:658.10px;top:19.15px">4</div>
<div class="r" style="left:606.30px;top:30.12px">アプリ禁止</div><div class="c" style="left:658.10px;top:30.12px">1</div>
<div class="r" style="left:606.30px;top:41.09px">操作</div><div class="c" style="left:658.10px;top:41.09px">5</div>
<div class="r" style="left:606.30px;top:52.06px">時間外</div><div class="c" style="left:658.10px;top:52.06px">2</div>
<div class="r" style="left:606.30px;top:63.03px">プリント</div><div class="c" style="left:658.10px;top:63.03px">1</div>
<div class="r" style="left:606.30px;top:74.00px"><span class="l">Web</span></div><div class="c" style="left:658.10px;top:74.00px">1</div>
<div class="r" style="left:606.30px;top:84.97px">脅威</div><div class="c" style="left:658.10px;top:84.97px">1</div>
<div class="r" style="left:606.30px;top:95.94px">オフィス未使用</div><div class="c" style="left:658.10px;top:95.94px">2</div>
<div class="r" style="left:606.30px;top:106.91px">スペック不足</div><div class="c" style="left:658.10px;top:106.91px">1</div>
<div class="th" style="left:671.2px;width:55.00px"><span class="l">11/8 (</span>木<span class="l">)</span></div>
<div class="r" style="left:683.90px;top:19.15px">資産</div><div class="c" style="left:714.40px;top:19.15px">5</div>
<div class="r" style="left:683.90px;top:30.12px">アプリ起動</div><div class="c" style="left:714.40px;top:30.12px">2</div>
<div class="r" style="left:683.90px;top:41.09px">アプリ禁止</div><div class="c" style="left:714.40px;top:41.09px">1</div>
<div class="r" style="left:683.90px;top:52.06px">操作</div><div class="c" style="left:714.40px;top:52.06px">4</div>
<div class="r" style="left:683.90px;top:63.03px">時間外</div><div class="c" style="left:714.40px;top:63.03px">3</div>
<div class="r" style="left:683.90px;top:74.00px">プリント</div><div class="c" style="left:714.40px;top:74.00px">1</div>
<div class="r" style="left:683.90px;top:84.97px"><span class="l">Web</span></div><div class="c" style="left:714.40px;top:84.97px">2</div>
<div class="r" style="left:683.90px;top:95.94px">アプリ<span class="l">ID</span></div><div class="c" style="left:714.40px;top:95.94px">1</div>
<div class="r" style="left:683.90px;top:106.91px">メール送信</div><div class="c" style="left:714.40px;top:106.91px">1</div>
<div class="r" style="left:683.90px;top:117.88px">脅威</div><div class="c" style="left:714.40px;top:117.88px">1</div>
<div class="r" style="left:683.90px;top:128.85px">アメーバ勤怠</div><div class="c" style="left:714.40px;top:128.85px">1</div>
<div class="r" style="left:683.90px;top:139.82px">オフィス未使用</div><div class="c" style="left:714.40px;top:139.82px">1</div>
<div class="r" style="left:683.90px;top:150.79px">個人容量圧迫</div><div class="c" style="left:714.40px;top:150.79px">1</div>
<div class="r" style="left:683.90px;top:161.76px">個人メール利用</div><div class="c" style="left:714.40px;top:161.76px">1</div>
</div>
</div>

<div class="abs" id="vs"></div><div class="abs" id="vthumb"></div>
<svg class="abs" style="left:698.7px;top:72.2px;width:3.6px;height:2.6px" viewBox="0 0 10 7"><path d="M0.500 6.500L5 1l4.500 5.500z" fill="#707070"/></svg>
<svg class="abs" style="left:698.6px;top:431.4px;width:3.8px;height:2.8px" viewBox="0 0 10 7"><path d="M0.500 0.500L5 6l4.500-5.500z" fill="#505050"/></svg>
<div class="abs" id="hs"></div><div class="abs" id="hthumb"></div>
<svg class="abs" style="left:194.3px;top:439.8px;width:2.6px;height:3.6px" viewBox="0 0 7 10"><path d="M6.500 0.500L1 5l5.500 4.500z" fill="#808080"/></svg>
<svg class="abs" style="left:691px;top:439.6px;width:2.8px;height:4px" viewBox="0 0 7 10"><path d="M0.500 0.500L6 5 0.500 9.500z" fill="#505050"/></svg>
<div class="abs" id="corner"></div>

<div class="abs" id="frame-t"></div><div class="abs" id="frame-l"></div><div class="abs" id="frame-r"></div><div class="abs" id="frame-b"></div>
</div></body></html>
